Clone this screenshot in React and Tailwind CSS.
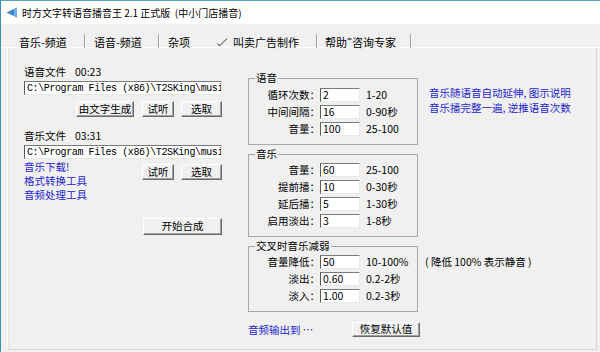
import React from "react";

const Btn = ({ children, className = "" }) => (
  <div
    className={
      "flex items-center justify-center bg-[#f0f0f0] border border-t-white border-l-white border-r-[#6a6a6a] border-b-[#6a6a6a] shadow-[inset_-1px_-1px_0_#a0a0a0] text-[10.5px] leading-none text-black " +
      className
    }
  >
    {children}
  </div>
);

const Input = ({ value, className = "" }) => (
  <div
    className={
      "bg-white border border-t-[#7a7a7a] border-l-[#5a5a5a] border-r-[#e8e8e8] border-b-[#e8e8e8] overflow-hidden whitespace-nowrap flex items-center pl-[2px] " +
      className
    }
  >
    {value}
  </div>
);

const Row = ({ label, value, range }) => (
  <div className="flex items-center h-[14px]">
    <div className="w-[71px] text-right leading-[14px] whitespace-nowrap">{label}</div>
    <Input value={value} className="w-[40px] h-[14px] text-[10.5px]" />
    <div className="ml-[6px] leading-[14px] whitespace-nowrap">{range}</div>
  </div>
);

const Group = ({ title, children, className = "" }) => (
  <fieldset
    className={
      "w-[170px] border border-[#a8a8a8] flex flex-col gap-[3px] px-0 " + className
    }
  >
    <legend className="ml-[6px] px-[1px] leading-[14px] text-[10.5px]">{title}</legend>
    {children}
  </fieldset>
);

const Sep = () => (
  <div className="w-[2px] h-[14px] mt-[-1px] border-l border-[#a0a0a0] border-r border-r-white shrink-0" />
);

export default function App() {
  const path = "C:\\Program Files (x86)\\T2SKing\\musi";
  return (
    <div className="w-[600px] h-[352px] bg-[#f0f0f0] flex flex-col overflow-hidden border-l border-[#3f8fb2] font-['Noto_Sans_CJK_SC','Noto_Sans',sans-serif] text-black">
      {/* title bar */}
      <div className="h-[24px] shrink-0 bg-white border-t border-[#5fa3c2] flex items-center">
        <svg width="12" height="11" viewBox="0 0 12 11" className="ml-[5px]">
          <path d="M0.5 5.5 L11 0.5 L11 10.5 Z" fill="#3a86c8" />
          <path d="M8 2 L11 0.5 L11 10.5 L8 9 Z" fill="#6fb0e6" />
        </svg>
        <div className="ml-[4px] text-[10px] leading-none whitespace-nowrap">
          时方文字转语音播音王 2.1 正式版 &nbsp;(中小门店播音)
        </div>
      </div>

      {/* tab strip */}
      <div className="h-[24px] shrink-0 flex items-start pt-[11px] pl-[18px] text-[11px] leading-[14px] whitespace-nowrap border-b border-white">
        <div className="w-[65px]">音乐-频道</div>
        <Sep />
        <div className="w-[72px] pl-[8px]">语音-频道</div>
        <Sep />
        <div className="w-[57px] pl-[8px]">杂项</div>
        <div className="w-[16px] h-[14px] flex items-center">
          <svg width="11" height="9" viewBox="0 0 11 9">
            <polyline points="0.5,5.5 2.5,8 10,0.5" fill="none" stroke="#333" strokeWidth="1" />
          </svg>
        </div>
        <div className="w-[83px]">叫卖广告制作</div>
        <Sep />
        <div className="w-[92px] pl-[7px]">帮助˜咨询专家</div>
        <Sep />
      </div>

      {/* panel */}
      <div className="flex-1 ml-[6px] w-[590px] mb-[2px] border-l border-white border-r border-r-[#d6d6d6] border-b border-b-[#d6d6d6] flex text-[10.5px]">
        <div className="flex-1 border-l border-[#e6e2e2] flex">
          {/* left column */}
          <div className="w-[198px] ml-[15px] pt-[17px] flex flex-col">
            <div className="h-[14px] leading-[14px] flex">
              <span>语音文件</span>
              <span className="ml-[9px]">00:23</span>
            </div>
            <Input
              value={path}
              className="mt-[2px] h-[14px] w-[198px] font-['Liberation_Mono',monospace] text-[10px] tracking-[-0.4px]"
            />
            <div className="mt-[6px] flex justify-end">
              <Btn className="w-[58px] h-[16px]">由文字生成</Btn>
              <Btn className="w-[32px] h-[16px] ml-[8px]">试听</Btn>
              <Btn className="w-[41px] h-[16px] ml-[7px]">选取</Btn>
            </div>
            <div className="mt-[12px] h-[14px] leading-[14px] flex">
              <span>音乐文件</span>
              <span className="ml-[9px]">03:31</span>
            </div>
            <Input
              value={path}
              className="mt-[2px] h-[14px] w-[198px] font-['Liberation_Mono',monospace] text-[10px] tracking-[-0.4px]"
            />
            <div className="mt-[1px] flex items-start justify-between">
              <div className="flex flex-col leading-[14px] text-[#2424cc]">
                <span>音乐下载!</span>
                <span>格式转换工具</span>
                <span>音频处理工具</span>
              </div>
              <div className="mt-[4px] flex">
                <Btn className="w-[32px] h-[16px]">试听</Btn>
                <Btn className="w-[41px] h-[16px] ml-[7px]">选取</Btn>
              </div>
            </div>
            <div className="mt-[16px] flex justify-end">
              <Btn className="w-[79px] h-[17px]">开始合成</Btn>
            </div>
          </div>

          {/* right column */}
          <div className="ml-[26px] pt-[23px] flex flex-col">
            <div className="flex items-start">
              <Group title="语音" className="pt-[3px] pb-[8px]">
                <Row label="循环次数：" value="2" range="1-20" />
                <Row label="中间间隔：" value="16" range="0-90秒" />
                <Row label="音量：" value="100" range="25-100" />
              </Group>
              <div className="ml-[11px] mt-[14px] flex flex-col leading-[15px] text-[#2424cc] whitespace-nowrap">
                <span>音乐随语音自动延伸, 图示说明</span>
                <span>音乐播完整一遍, 逆推语音次数</span>
              </div>
            </div>

            <Group title="音乐" className="mt-[2px] pt-[2px] pb-[8px]">
              <Row label="音量：" value="60" range="25-100" />
              <Row label="提前播：" value="10" range="0-30秒" />
              <Row label="延后播：" value="5" range="1-30秒" />
              <Row label="启用淡出：" value="3" range="1-8秒" />
            </Group>

            <div className="flex items-start mt-[2px]">
              <Group title="交叉时音乐减弱" className="pt-[2px] pb-[8px]">
                <Row label="音量降低：" value="50" range="10-100%" />
                <Row label="淡出：" value="0.60" range="0.2-2秒" />
                <Row label="淡入：" value="1.00" range="0.2-3秒" />
              </Group>
              <div className="ml-[7px] mt-[16px] leading-[14px] whitespace-nowrap">
                ( 降低 100% 表示静音 )
              </div>
            </div>

            <div className="mt-[10px] flex items-center">
              <div className="w-[104px] text-[#2424cc] leading-[14px]">音频输出到 …</div>
              <Btn className="w-[68px] h-[15px]">恢复默认值</Btn>
            </div>
          </div>
        </div>
      </div>
    </div>
  );
}
